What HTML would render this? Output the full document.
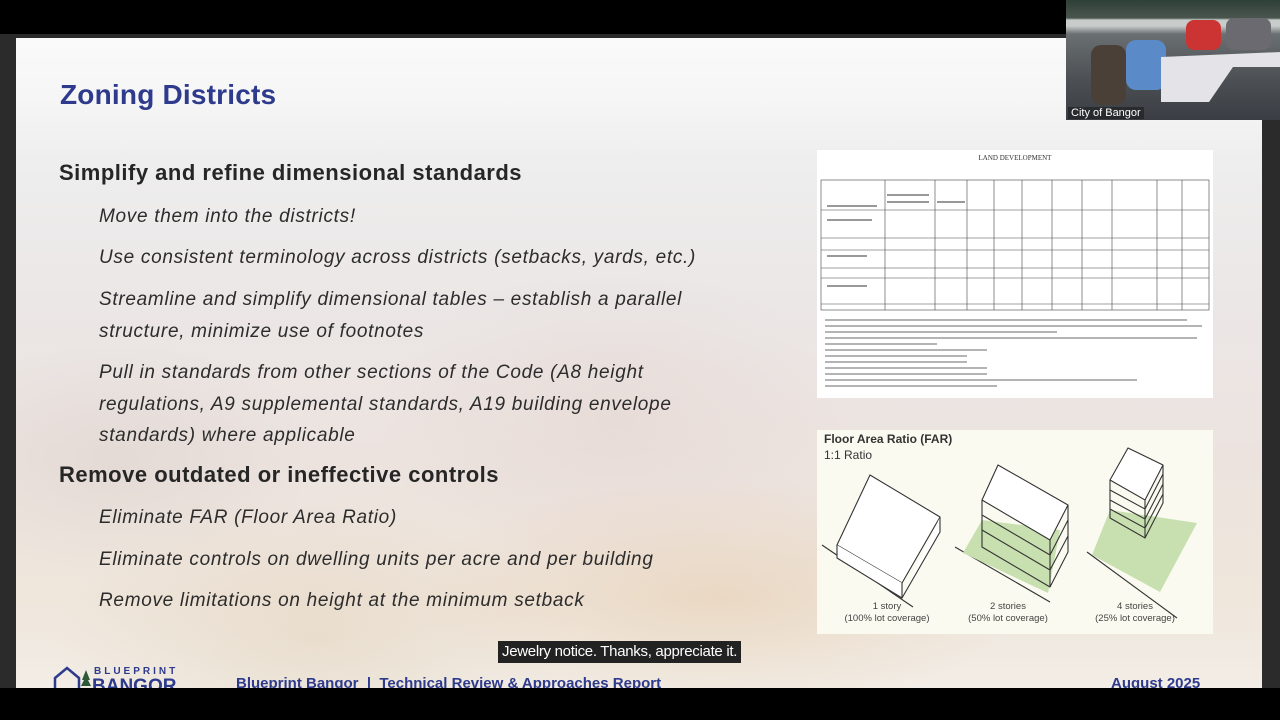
<!DOCTYPE html>
<html><head><meta charset="utf-8"><style>
*{margin:0;padding:0;box-sizing:border-box}
body{width:1280px;height:720px;background:#000;position:relative;overflow:hidden;font-family:"Liberation Sans",sans-serif}
.gut{position:absolute;top:34px;left:0;width:1280px;height:654px;background:#2b2b2b}
.slide{position:absolute;left:16px;top:38px;width:1246px;height:650px;overflow:hidden;
background:
radial-gradient(ellipse 300px 120px at 700px 560px,rgba(225,190,150,.35),transparent),
radial-gradient(ellipse 260px 140px at 300px 600px,rgba(220,200,170,.35),transparent),
radial-gradient(ellipse 200px 120px at 100px 420px,rgba(215,205,200,.4),transparent),
radial-gradient(ellipse 240px 150px at 600px 380px,rgba(225,205,200,.35),transparent),
linear-gradient(#fafafa 0px,#f6f6f6 60px,#eeeeee 120px,#ebe7e6 260px,#ece3df 420px,#efe6dc 560px,#f2ede6 650px)}
.t{position:absolute;white-space:nowrap;color:#2a2a2a}
h1{position:absolute;left:44px;top:41px;font-size:28px;color:#2e3a8c;font-weight:bold;letter-spacing:0.2px}
.h{font-size:22px;font-weight:bold;color:#262626;letter-spacing:0.5px}
.i{font-size:19px;font-style:italic;color:#2c2c2c;letter-spacing:0.7px}
.doc{position:absolute;left:801px;top:112px;width:396px;height:248px;background:#fff}
.far{position:absolute;left:801px;top:392px;width:396px;height:204px;background:#fafaf0}
.cap{position:absolute;background:#222;color:#fff;font-size:15px;padding:1px 4px;left:498px;top:641px;height:22px;line-height:20px;letter-spacing:-0.3px}
.foot{position:absolute;top:637px;font-size:15px;color:#2e3a8c;font-weight:bold}
.cam{position:absolute;left:1066px;top:0;width:214px;height:120px;background:linear-gradient(180deg,#2e4038 0,#4a554e 18px,#c8ccca 20px,#c8ccca 26px,#6a6f72 34px,#4c5054 80px,#3a3e44 120px)}
.lbl{position:absolute;width:110px;text-align:center;font-size:9.5px;color:#444;line-height:12px;white-space:nowrap}
</style></head><body>
<div class="gut"></div>
<div class="slide">
<h1>Zoning Districts</h1>
<div class="t h" style="left:43px;top:122px">Simplify and refine dimensional standards</div>
<div class="t i" style="left:83px;top:168px">Move them into the districts!</div>
<div class="t i" style="left:83px;top:209px">Use consistent terminology across districts (setbacks, yards, etc.)</div>
<div class="t i" style="left:83px;top:246px;line-height:31.5px">Streamline and simplify dimensional tables – establish a parallel<br>structure, minimize use of footnotes</div>
<div class="t i" style="left:83px;top:319px;line-height:31.5px">Pull in standards from other sections of the Code (A8 height<br>regulations, A9 supplemental standards, A19 building envelope<br>standards) where applicable</div>
<div class="t h" style="left:43px;top:424px">Remove outdated or ineffective controls</div>
<div class="t i" style="left:83px;top:469px">Eliminate FAR (Floor Area Ratio)</div>
<div class="t i" style="left:83px;top:511px">Eliminate controls on dwelling units per acre and per building</div>
<div class="t i" style="left:83px;top:552px">Remove limitations on height at the minimum setback</div>
<div class="doc">
<div style="position:absolute;top:4px;width:100%;text-align:center;font-family:'Liberation Serif',serif;font-size:7px;color:#333">LAND DEVELOPMENT</div>
<svg width="396" height="248" style="position:absolute;left:0;top:0" stroke="#444" stroke-width=".6" fill="none">
<rect x="4" y="30" width="388" height="130"/>
<line x1="4" y1="60" x2="392" y2="60"/><line x1="4" y1="88" x2="392" y2="88"/><line x1="4" y1="100" x2="392" y2="100"/><line x1="4" y1="118" x2="392" y2="118"/><line x1="4" y1="128" x2="392" y2="128"/><line x1="4" y1="154" x2="392" y2="154"/>
<g><line x1="68" y1="30" x2="68" y2="160"/><line x1="118" y1="30" x2="118" y2="160"/><line x1="150" y1="30" x2="150" y2="160"/><line x1="177" y1="30" x2="177" y2="160"/><line x1="205" y1="30" x2="205" y2="160"/><line x1="235" y1="30" x2="235" y2="160"/><line x1="265" y1="30" x2="265" y2="160"/><line x1="295" y1="30" x2="295" y2="160"/><line x1="340" y1="30" x2="340" y2="160"/><line x1="365" y1="30" x2="365" y2="160"/></g>
<g stroke="#999" stroke-width="2"><line x1="70" y1="45" x2="112" y2="45"/><line x1="70" y1="52" x2="112" y2="52"/><line x1="10" y1="56" x2="60" y2="56"/><line x1="120" y1="52" x2="148" y2="52"/><line x1="10" y1="70" x2="55" y2="70"/><line x1="10" y1="106" x2="50" y2="106"/><line x1="10" y1="136" x2="50" y2="136"/></g>
<g stroke="#888" stroke-width="1.2"><line x1="8" y1="170" x2="370" y2="170"/><line x1="8" y1="176" x2="385" y2="176"/><line x1="8" y1="182" x2="240" y2="182"/><line x1="8" y1="188" x2="380" y2="188"/><line x1="8" y1="194" x2="120" y2="194"/><line x1="8" y1="200" x2="170" y2="200"/><line x1="8" y1="206" x2="150" y2="206"/><line x1="8" y1="212" x2="150" y2="212"/><line x1="8" y1="218" x2="170" y2="218"/><line x1="8" y1="224" x2="170" y2="224"/><line x1="8" y1="230" x2="320" y2="230"/><line x1="8" y1="236" x2="180" y2="236"/></g>
</svg></div>
<div class="far">
<div style="position:absolute;left:7px;top:2px;font-size:12px;font-weight:bold;color:#333">Floor Area Ratio (FAR)</div>
<div style="position:absolute;left:7px;top:18px;font-size:12px;color:#333">1:1 Ratio</div>
<svg width="396" height="204" style="position:absolute;left:0;top:0" stroke="#333" stroke-width="1.1" stroke-linejoin="round" fill="none">
<path d="M5 115 L96 177"/>
<path d="M20 115 L53 45 L123 87 L85 153 Z" fill="#fff"/>
<path d="M20 115 L20 128 L85 168 L85 153 M85 168 L123 102 L123 87" fill="#fff"/>
<path d="M138 117 L233 172"/>
<path d="M146 123 L165 90 L243 100 L231 163 Z" fill="#c8e0b0" stroke="none"/>
<path d="M165 70 L181 35 L251 75 L233 110 Z" fill="#fff"/>
<path d="M165 70 L165 117 L233 157 L233 110 M233 157 L251 122 L251 75 M165 85 L233 125 L251 90 M165 100 L233 140 L251 106" fill="none"/>
<path d="M270 122 L360 188"/>
<path d="M275 125 L293 80 L380 93 L343 162 Z" fill="#c8e0b0" stroke="none"/>
<path d="M293 50 L311 18 L346 35 L328 70 Z" fill="#fff"/>
<path d="M293 50 L293 88 L328 108 L328 70 M328 108 L346 73 L346 35 M293 60 L328 79 L346 44 M293 70 L328 89 L346 54 M293 79 L328 98 L346 64" fill="none"/>
</svg>
<div class="lbl" style="left:15px;top:171px">1 story<br>(100% lot coverage)</div>
<div class="lbl" style="left:136px;top:171px">2 stories<br>(50% lot coverage)</div>
<div class="lbl" style="left:263px;top:171px">4 stories<br>(25% lot coverage)</div>
</div>
<div class="foot" style="left:220px">Blueprint Bangor &nbsp;|&nbsp; Technical Review &amp; Approaches Report</div>
<div class="foot" style="left:1095px">August 2025</div>
<div style="position:absolute;top:628px;font-size:10px;color:#2e3a8c;letter-spacing:3px;font-weight:bold;left:78px">BLUEPRINT</div>
<div style="position:absolute;left:76px;top:638px;font-size:19px;color:#2e3a8c;font-weight:bold">BANGOR</div>
<svg style="position:absolute;left:36px;top:628px" width="40" height="22"><path d="M3 22 L3 12 L15 2 L27 12 L27 22" stroke="#2e3a8c" stroke-width="2.5" fill="none"/><path d="M34 4 L30 14 L38 14 Z M34 10 L29 20 L39 20 Z" fill="#2e5a3a"/></svg>
</div>
<div class="cap">Jewelry notice. Thanks, appreciate it.</div>
<div class="cam">
<div style="position:absolute;left:60px;top:40px;width:40px;height:50px;background:#5a8ac8;border-radius:10px"></div>
<div style="position:absolute;left:25px;top:45px;width:35px;height:60px;background:#4a4038;border-radius:10px"></div>
<div style="position:absolute;left:120px;top:20px;width:35px;height:30px;background:#c33;border-radius:8px"></div>
<div style="position:absolute;left:160px;top:18px;width:45px;height:32px;background:#6a6a70;border-radius:8px"></div>
<div style="position:absolute;left:95px;top:52px;width:120px;height:50px;background:#e4e4e8;clip-path:polygon(0 10%,100% 0,100% 30%,60% 30%,40% 100%,0 100%)"></div>
<div style="position:absolute;left:2px;bottom:1px;color:#fff;font-size:11px;background:rgba(0,0,0,.35);padding:0 3px">City of Bangor</div></div>
</body></html>
